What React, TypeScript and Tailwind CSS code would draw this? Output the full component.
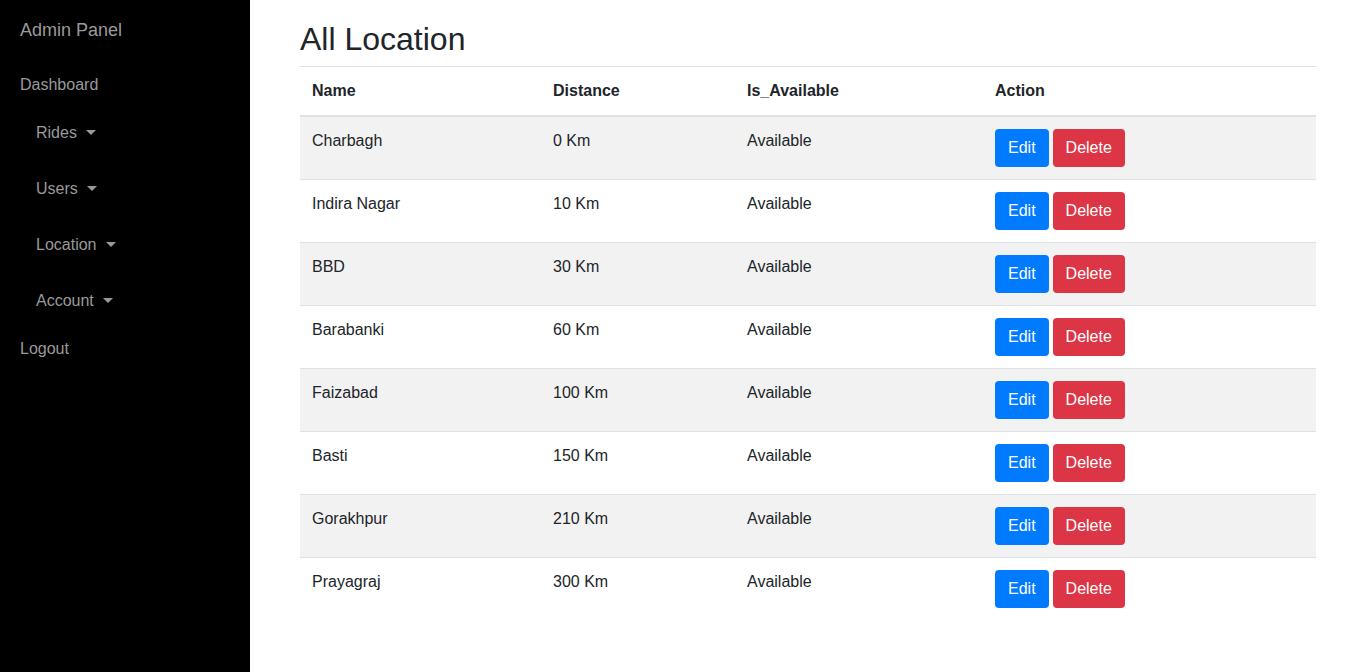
import React from "react";

const locations = [
  { name: "Charbagh", distance: "0 Km" },
  { name: "Indira Nagar", distance: "10 Km" },
  { name: "BBD", distance: "30 Km" },
  { name: "Barabanki", distance: "60 Km" },
  { name: "Faizabad", distance: "100 Km" },
  { name: "Basti", distance: "150 Km" },
  { name: "Gorakhpur", distance: "210 Km" },
  { name: "Prayagraj", distance: "300 Km" },
];

const Caret = () => (
  <span className="inline-block ml-[9px] align-[3px] w-0 h-0 border-t-[5px] border-t-[#999] border-x-[5px] border-x-transparent" />
);

const Sidebar = () => (
  <aside className="w-[250px] shrink-0 bg-black text-[#999] min-h-[672px]">
    <div className="px-5 pt-[16px] text-[18px] leading-[28px]">Admin Panel</div>
    <nav className="mt-[21px] text-[16px] leading-6">
      <div className="px-5 py-2">Dashboard</div>
      {["Rides", "Users", "Location", "Account"].map((item) => (
        <div key={item} className="pl-9 pt-[16px] pb-[16px] mt-0">
          {item}
          <Caret />
        </div>
      ))}
      <div className="px-5 py-2">Logout</div>
    </nav>
  </aside>
);

export default function App() {
  return (
    <div className="flex min-h-[672px] bg-white font-['Liberation_Sans',Arial,sans-serif] text-[#212529]">
      <Sidebar />
      <main className="flex-1 px-[50px] pt-[20px]">
        <h2 className="text-[32px] leading-[38px] mb-[8px]">All Location</h2>
        <table className="w-full border-collapse text-[16px] leading-6">
          <thead>
            <tr className="border-t border-[#dee2e6]">
              <th className="text-left font-bold p-3 w-[241px] border-b-2 border-[#dee2e6]">Name</th>
              <th className="text-left font-bold p-3 w-[194px] border-b-2 border-[#dee2e6]">Distance</th>
              <th className="text-left font-bold p-3 w-[248px] border-b-2 border-[#dee2e6]">Is_Available</th>
              <th className="text-left font-bold p-3 border-b-2 border-[#dee2e6]">Action</th>
            </tr>
          </thead>
          <tbody>
            {locations.map((loc, i) => (
              <tr
                key={loc.name}
                className={`${i % 2 === 0 ? "bg-[#f2f2f2]" : "bg-white"} ${i > 0 ? "border-t border-[#dee2e6]" : ""}`}
              >
                <td className="p-3 align-top">{loc.name}</td>
                <td className="p-3 align-top">{loc.distance}</td>
                <td className="p-3 align-top">Available</td>
                <td className="p-3 align-top">
                  <div className="flex gap-1">
                    <button className="h-[38px] px-[13px] rounded bg-[#007bff] text-white leading-6">Edit</button>
                    <button className="h-[38px] px-[13px] rounded bg-[#dc3545] text-white leading-6">Delete</button>
                  </div>
                </td>
              </tr>
            ))}
          </tbody>
        </table>
      </main>
    </div>
  );
}
